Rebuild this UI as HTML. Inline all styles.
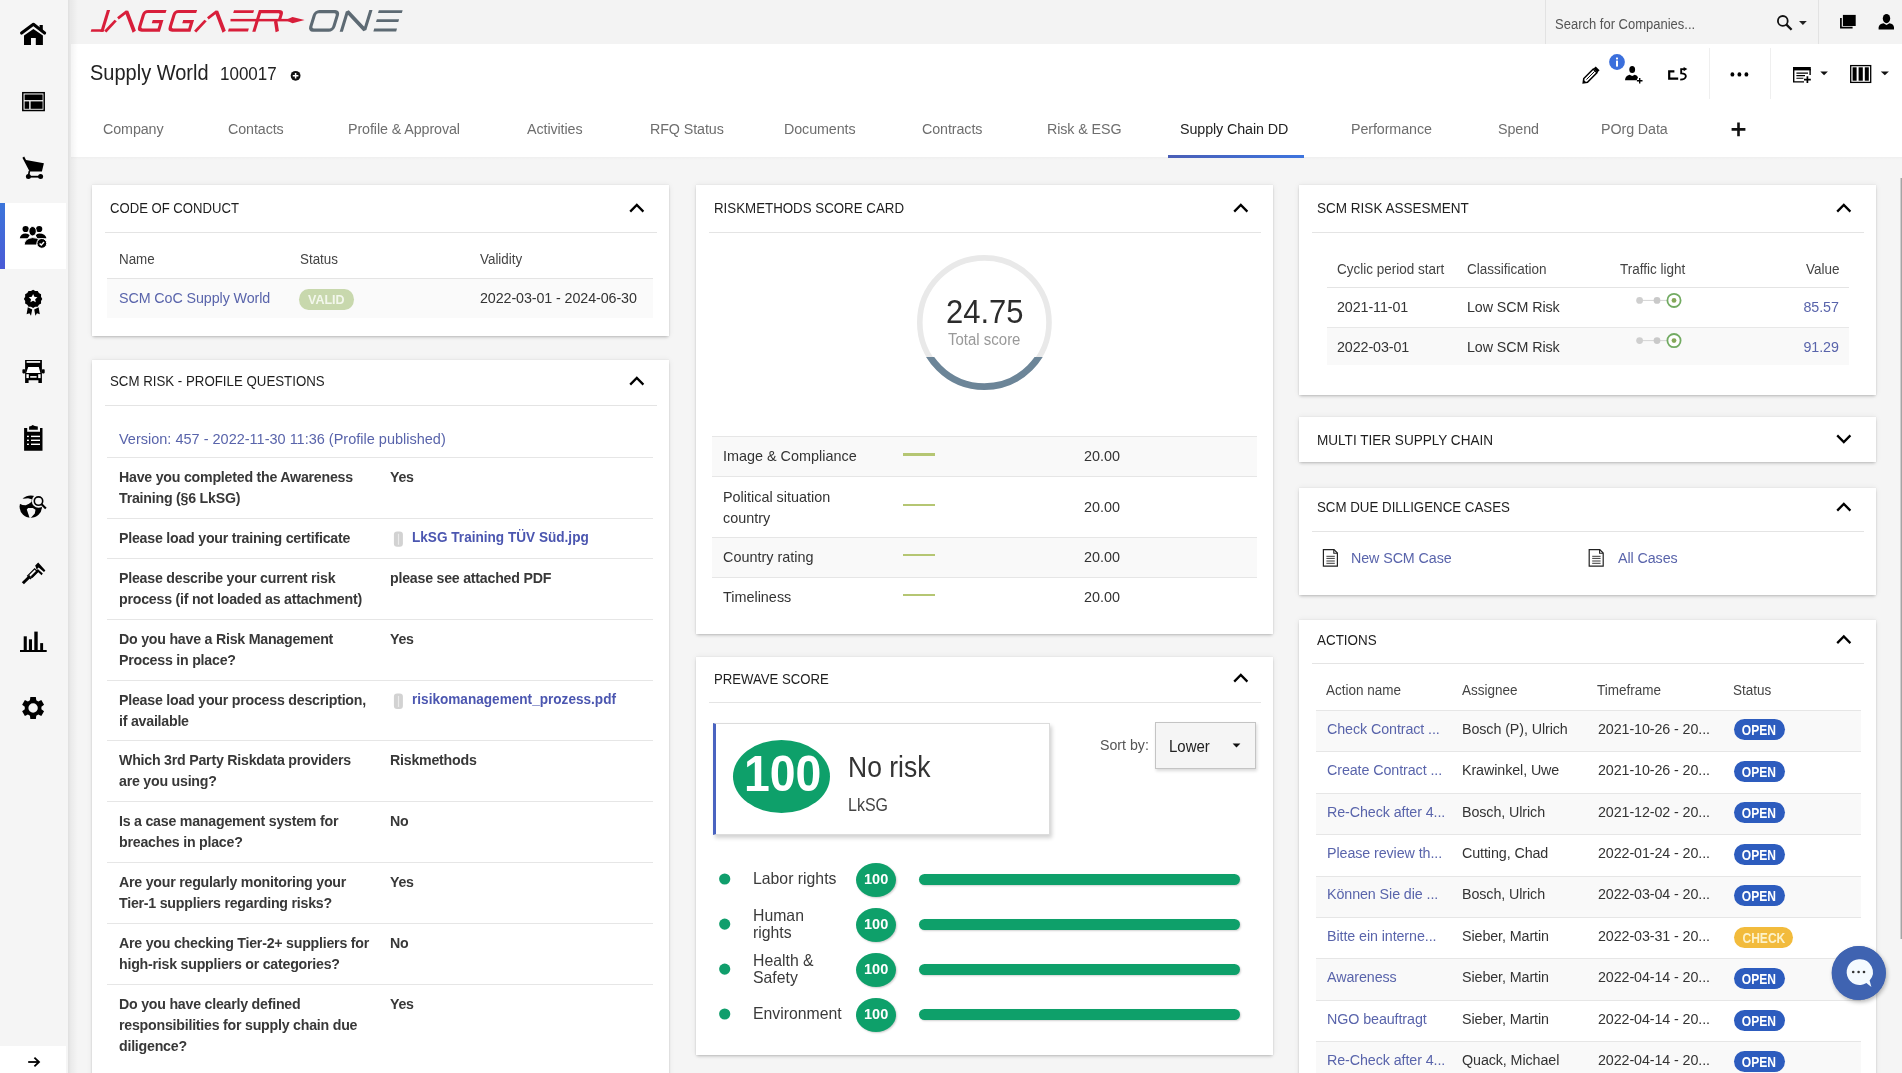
<!DOCTYPE html><html><head><meta charset="utf-8"><title>Supply World</title><style>
*{margin:0;padding:0;box-sizing:border-box}
html,body{width:1902px;height:1073px;overflow:hidden;background:#f5f5f5;font-family:"Liberation Sans",sans-serif;}
#pg{position:relative;width:1902px;height:1073px;overflow:hidden;background:#f5f5f5}
.t{position:absolute}
.r{position:absolute}
.card{position:absolute;background:#fff;box-shadow:0 2px 3px -1px rgba(0,0,0,0.22),0 0 6px rgba(0,0,0,0.07),0 0 1px rgba(0,0,0,0.12)}
.ttl{letter-spacing:-0.45px}
.q{font-weight:bold;color:#2f2f2f}
.badge{position:absolute;height:21px;border-radius:11px;color:#fff;font-weight:bold;font-size:14px;line-height:23px;text-align:center;white-space:nowrap}
svg.ov{position:absolute;left:0;top:0;width:1902px;height:1073px;pointer-events:none}
</style></head><body><div id="pg">
<div class="r" style="left:0px;top:0px;width:69px;height:1073px;background:#f5f5f5;"></div>
<div class="r" style="left:5px;top:203px;width:61px;height:66px;background:#fff;"></div>
<div class="r" style="left:0px;top:203px;width:5px;height:66px;background:linear-gradient(#3b75da,#4a5ad6);"></div>
<div class="r" style="left:0px;top:1046px;width:66px;height:27px;background:#fff;"></div>
<div class="r" style="left:71px;top:0px;width:1831px;height:44px;background:#f3f3f3;"></div>
<div class="r" style="left:1545px;top:0px;width:1px;height:44px;background:#e2e2e2;"></div>
<div class="r" style="left:1818px;top:0px;width:1px;height:44px;background:#e2e2e2;"></div>
<div class="t " style="left:1555.4px;top:15.68px;font-size:13.91px;line-height:16.0px;color:#555;white-space:nowrap;transform:scaleX(0.9346);transform-origin:0 0;">Search for Companies...</div>
<div class="r" style="left:71px;top:44px;width:1831px;height:113px;background:#fff;"></div>
<div class="r" style="left:71px;top:157px;width:1831px;height:3px;background:linear-gradient(rgba(0,0,0,0.025),rgba(0,0,0,0));"></div>
<div class="t " style="left:90px;top:60.58px;font-size:21.4px;line-height:24.61px;color:#222;white-space:nowrap;transform:scaleX(0.9346);transform-origin:0 0;">Supply World</div>
<div class="t " style="left:219.5px;top:63.54px;font-size:18.19px;line-height:20.92px;color:#222;white-space:nowrap;transform:scaleX(0.9346);transform-origin:0 0;">100017</div>
<div class="r" style="left:1709px;top:48px;width:1px;height:51px;background:#efefef;"></div>
<div class="r" style="left:1770px;top:48px;width:1px;height:51px;background:#efefef;"></div>
<div class="t " style="left:102.6px;top:119.60px;font-size:15.3px;line-height:17.59px;color:#6e6e6e;white-space:nowrap;transform:scaleX(0.9346);transform-origin:0 0;letter-spacing:-0.1px;">Company</div>
<div class="t " style="left:227.7px;top:119.60px;font-size:15.3px;line-height:17.59px;color:#6e6e6e;white-space:nowrap;transform:scaleX(0.9346);transform-origin:0 0;letter-spacing:-0.1px;">Contacts</div>
<div class="t " style="left:348.3px;top:119.60px;font-size:15.3px;line-height:17.59px;color:#6e6e6e;white-space:nowrap;transform:scaleX(0.9346);transform-origin:0 0;letter-spacing:-0.1px;">Profile &amp; Approval</div>
<div class="t " style="left:527.1px;top:119.60px;font-size:15.3px;line-height:17.59px;color:#6e6e6e;white-space:nowrap;transform:scaleX(0.9346);transform-origin:0 0;letter-spacing:-0.1px;">Activities</div>
<div class="t " style="left:649.5px;top:119.60px;font-size:15.3px;line-height:17.59px;color:#6e6e6e;white-space:nowrap;transform:scaleX(0.9346);transform-origin:0 0;letter-spacing:-0.1px;">RFQ Status</div>
<div class="t " style="left:784.2px;top:119.60px;font-size:15.3px;line-height:17.59px;color:#6e6e6e;white-space:nowrap;transform:scaleX(0.9346);transform-origin:0 0;letter-spacing:-0.1px;">Documents</div>
<div class="t " style="left:921.5px;top:119.60px;font-size:15.3px;line-height:17.59px;color:#6e6e6e;white-space:nowrap;transform:scaleX(0.9346);transform-origin:0 0;letter-spacing:-0.1px;">Contracts</div>
<div class="t " style="left:1047.3px;top:119.60px;font-size:15.3px;line-height:17.59px;color:#6e6e6e;white-space:nowrap;transform:scaleX(0.9346);transform-origin:0 0;letter-spacing:-0.1px;">Risk &amp; ESG</div>
<div class="t " style="left:1180.1px;top:119.60px;font-size:15.3px;line-height:17.59px;color:#222;white-space:nowrap;transform:scaleX(0.9346);transform-origin:0 0;letter-spacing:-0.1px;">Supply Chain DD</div>
<div class="t " style="left:1350.5px;top:119.60px;font-size:15.3px;line-height:17.59px;color:#6e6e6e;white-space:nowrap;transform:scaleX(0.9346);transform-origin:0 0;letter-spacing:-0.1px;">Performance</div>
<div class="t " style="left:1497.6px;top:119.60px;font-size:15.3px;line-height:17.59px;color:#6e6e6e;white-space:nowrap;transform:scaleX(0.9346);transform-origin:0 0;letter-spacing:-0.1px;">Spend</div>
<div class="t " style="left:1601px;top:119.60px;font-size:15.3px;line-height:17.59px;color:#6e6e6e;white-space:nowrap;transform:scaleX(0.9346);transform-origin:0 0;letter-spacing:-0.1px;">POrg Data</div>
<div class="r" style="left:1168px;top:155px;width:136px;height:3px;background:linear-gradient(90deg,#4a5eb6,#3d74de);"></div>
<div class="card" style="left:92px;top:185px;width:577px;height:151px"></div>
<div class="t " style="left:109.8px;top:198.82px;font-size:15.5px;line-height:17.82px;color:#1e1e1e;white-space:nowrap;transform:scaleX(0.8458);transform-origin:0 0;">CODE OF CONDUCT</div>
<div class="r" style="left:105px;top:232px;width:552px;height:1px;background:#e4e4e4;"></div>
<div class="t " style="left:119px;top:251.68px;font-size:13.8px;line-height:15.87px;color:#444;white-space:nowrap;transform:scaleX(0.9709);transform-origin:0 0;">Name</div>
<div class="t " style="left:299.5px;top:251.68px;font-size:13.8px;line-height:15.87px;color:#444;white-space:nowrap;transform:scaleX(0.9709);transform-origin:0 0;">Status</div>
<div class="t " style="left:480px;top:251.68px;font-size:13.8px;line-height:15.87px;color:#444;white-space:nowrap;transform:scaleX(0.9709);transform-origin:0 0;">Validity</div>
<div class="r" style="left:107px;top:278px;width:546px;height:1px;background:#e4e4e4;"></div>
<div class="r" style="left:107px;top:279px;width:546px;height:39px;background:#fafafa;"></div>
<div class="t " style="left:119px;top:289.10px;font-size:15.3px;line-height:17.59px;color:#5964ab;white-space:nowrap;transform:scaleX(0.9346);transform-origin:0 0;letter-spacing:-0.1px;">SCM CoC Supply World</div>
<div class="r" style="left:298.6px;top:288.7px;width:55.4px;height:21.2px;background:#c8d8ad;border-radius:10px/11px"></div>
<div class="t " style="left:307.6px;top:291.67px;font-size:13.38px;line-height:15.39px;color:#f3f7ec;font-weight:700;white-space:nowrap;transform:scaleX(0.9346);transform-origin:0 0;">VALID</div>
<div class="t " style="left:480px;top:289.10px;font-size:15.3px;line-height:17.59px;color:#333;white-space:nowrap;transform:scaleX(0.9346);transform-origin:0 0;letter-spacing:-0.1px;">2022-03-01 - 2024-06-30</div>
<div class="card" style="left:92px;top:360px;width:577px;height:730px"></div>
<div class="t " style="left:109.8px;top:371.72px;font-size:15.5px;line-height:17.82px;color:#1e1e1e;white-space:nowrap;transform:scaleX(0.8565);transform-origin:0 0;">SCM RISK - PROFILE QUESTIONS</div>
<div class="r" style="left:105px;top:405px;width:552px;height:1px;background:#e4e4e4;"></div>
<div class="t " style="left:118.5px;top:430.40px;font-size:15.52px;line-height:17.85px;color:#5964ab;white-space:nowrap;transform:scaleX(0.9346);transform-origin:0 0;">Version: 457 - 2022-11-30 11:36 (Profile published)</div>
<div class="r" style="left:107px;top:457px;width:546px;height:1px;background:#e6e6e6;"></div>
<div class="r" style="left:107px;top:518px;width:546px;height:1px;background:#e6e6e6;"></div>
<div class="r" style="left:107px;top:558px;width:546px;height:1px;background:#e6e6e6;"></div>
<div class="r" style="left:107px;top:619px;width:546px;height:1px;background:#e6e6e6;"></div>
<div class="r" style="left:107px;top:680px;width:546px;height:1px;background:#e6e6e6;"></div>
<div class="r" style="left:107px;top:740px;width:546px;height:1px;background:#e6e6e6;"></div>
<div class="r" style="left:107px;top:801px;width:546px;height:1px;background:#e6e6e6;"></div>
<div class="r" style="left:107px;top:862px;width:546px;height:1px;background:#e6e6e6;"></div>
<div class="r" style="left:107px;top:923px;width:546px;height:1px;background:#e6e6e6;"></div>
<div class="r" style="left:107px;top:984px;width:546px;height:1px;background:#e6e6e6;"></div>
<div class="t " style="left:118.5px;top:466.14px;font-size:15.19px;line-height:21px;color:#383838;font-weight:700;white-space:nowrap;transform:scaleX(0.9346);transform-origin:0 0;letter-spacing:-0.25px;">Have you completed the Awareness<br>Training (§6 LkSG)</div>
<div class="t " style="left:389.8px;top:466.14px;font-size:15.19px;line-height:21px;color:#383838;font-weight:700;white-space:nowrap;transform:scaleX(0.9346);transform-origin:0 0;letter-spacing:-0.25px;">Yes</div>
<div class="t " style="left:118.5px;top:527.04px;font-size:15.19px;line-height:21px;color:#383838;font-weight:700;white-space:nowrap;transform:scaleX(0.9346);transform-origin:0 0;letter-spacing:-0.25px;">Please load your training certificate</div>
<div class="t " style="left:411.9px;top:529.39px;font-size:14.55px;line-height:16.73px;color:#4b56b0;font-weight:700;white-space:nowrap;transform:scaleX(0.9346);transform-origin:0 0;">LkSG Training TÜV Süd.jpg</div>
<div class="t " style="left:118.5px;top:567.14px;font-size:15.19px;line-height:21px;color:#383838;font-weight:700;white-space:nowrap;transform:scaleX(0.9346);transform-origin:0 0;letter-spacing:-0.25px;">Please describe your current risk<br>process (if not loaded as attachment)</div>
<div class="t " style="left:389.8px;top:567.14px;font-size:15.19px;line-height:21px;color:#383838;font-weight:700;white-space:nowrap;transform:scaleX(0.9346);transform-origin:0 0;letter-spacing:-0.25px;">please see attached PDF</div>
<div class="t " style="left:118.5px;top:627.94px;font-size:15.19px;line-height:21px;color:#383838;font-weight:700;white-space:nowrap;transform:scaleX(0.9346);transform-origin:0 0;letter-spacing:-0.25px;">Do you have a Risk Management<br>Process in place?</div>
<div class="t " style="left:389.8px;top:627.94px;font-size:15.19px;line-height:21px;color:#383838;font-weight:700;white-space:nowrap;transform:scaleX(0.9346);transform-origin:0 0;letter-spacing:-0.25px;">Yes</div>
<div class="t " style="left:118.5px;top:689.14px;font-size:15.19px;line-height:21px;color:#383838;font-weight:700;white-space:nowrap;transform:scaleX(0.9346);transform-origin:0 0;letter-spacing:-0.25px;">Please load your process description,<br>if available</div>
<div class="t " style="left:411.9px;top:691.49px;font-size:14.55px;line-height:16.73px;color:#4b56b0;font-weight:700;white-space:nowrap;transform:scaleX(0.9346);transform-origin:0 0;">risikomanagement_prozess.pdf</div>
<div class="t " style="left:118.5px;top:749.24px;font-size:15.19px;line-height:21px;color:#383838;font-weight:700;white-space:nowrap;transform:scaleX(0.9346);transform-origin:0 0;letter-spacing:-0.25px;">Which 3rd Party Riskdata providers<br>are you using?</div>
<div class="t " style="left:389.8px;top:749.24px;font-size:15.19px;line-height:21px;color:#383838;font-weight:700;white-space:nowrap;transform:scaleX(0.9346);transform-origin:0 0;letter-spacing:-0.25px;">Riskmethods</div>
<div class="t " style="left:118.5px;top:810.14px;font-size:15.19px;line-height:21px;color:#383838;font-weight:700;white-space:nowrap;transform:scaleX(0.9346);transform-origin:0 0;letter-spacing:-0.25px;">Is a case management system for<br>breaches in place?</div>
<div class="t " style="left:389.8px;top:810.14px;font-size:15.19px;line-height:21px;color:#383838;font-weight:700;white-space:nowrap;transform:scaleX(0.9346);transform-origin:0 0;letter-spacing:-0.25px;">No</div>
<div class="t " style="left:118.5px;top:871.04px;font-size:15.19px;line-height:21px;color:#383838;font-weight:700;white-space:nowrap;transform:scaleX(0.9346);transform-origin:0 0;letter-spacing:-0.25px;">Are your regularly monitoring your<br>Tier-1 suppliers regarding risks?</div>
<div class="t " style="left:389.8px;top:871.04px;font-size:15.19px;line-height:21px;color:#383838;font-weight:700;white-space:nowrap;transform:scaleX(0.9346);transform-origin:0 0;letter-spacing:-0.25px;">Yes</div>
<div class="t " style="left:118.5px;top:931.84px;font-size:15.19px;line-height:21px;color:#383838;font-weight:700;white-space:nowrap;transform:scaleX(0.9346);transform-origin:0 0;letter-spacing:-0.25px;">Are you checking Tier-2+ suppliers for<br>high-risk suppliers or categories?</div>
<div class="t " style="left:389.8px;top:931.84px;font-size:15.19px;line-height:21px;color:#383838;font-weight:700;white-space:nowrap;transform:scaleX(0.9346);transform-origin:0 0;letter-spacing:-0.25px;">No</div>
<div class="t " style="left:118.5px;top:992.84px;font-size:15.19px;line-height:21px;color:#383838;font-weight:700;white-space:nowrap;transform:scaleX(0.9346);transform-origin:0 0;letter-spacing:-0.25px;">Do you have clearly defined<br>responsibilities for supply chain due<br>diligence?</div>
<div class="t " style="left:389.8px;top:992.84px;font-size:15.19px;line-height:21px;color:#383838;font-weight:700;white-space:nowrap;transform:scaleX(0.9346);transform-origin:0 0;letter-spacing:-0.25px;">Yes</div>
<div class="card" style="left:696px;top:185px;width:577px;height:449px"></div>
<div class="t " style="left:713.8px;top:199.22px;font-size:15.5px;line-height:17.82px;color:#1e1e1e;white-space:nowrap;transform:scaleX(0.8584);transform-origin:0 0;">RISKMETHODS SCORE CARD</div>
<div class="r" style="left:709px;top:232px;width:552px;height:1px;background:#e4e4e4;"></div>
<div class="t " style="left:946.2px;top:293.13px;font-size:33.17px;line-height:38.15px;color:#2c2c2c;white-space:nowrap;transform:scaleX(0.9346);transform-origin:0 0;">24.75</div>
<div class="t " style="left:948.3px;top:329.61px;font-size:16.05px;line-height:18.46px;color:#999;white-space:nowrap;transform:scaleX(0.9346);transform-origin:0 0;">Total score</div>
<div class="r" style="left:712px;top:436px;width:545px;height:40px;background:#f9f9f9;"></div>
<div class="r" style="left:712px;top:537px;width:545px;height:40px;background:#f9f9f9;"></div>
<div class="r" style="left:712px;top:436px;width:545px;height:1px;background:#e6e6e6;"></div>
<div class="r" style="left:712px;top:476px;width:545px;height:1px;background:#e6e6e6;"></div>
<div class="r" style="left:712px;top:537px;width:545px;height:1px;background:#e6e6e6;"></div>
<div class="r" style="left:712px;top:577px;width:545px;height:1px;background:#e6e6e6;"></div>
<div class="t " style="left:722.5px;top:445.16px;font-size:15.41px;line-height:21px;color:#333;white-space:nowrap;transform:scaleX(0.9346);transform-origin:0 0;">Image &amp; Compliance</div>
<div class="r" style="left:903px;top:453.3px;width:32px;height:2.8999999999999773px;background:#b5c673;"></div>
<div class="t " style="left:1084.3px;top:446.80px;font-size:15.41px;line-height:17.72px;color:#333;white-space:nowrap;transform:scaleX(0.9346);transform-origin:0 0;">20.00</div>
<div class="t " style="left:722.5px;top:485.56px;font-size:15.41px;line-height:21px;color:#333;white-space:nowrap;transform:scaleX(0.9346);transform-origin:0 0;">Political situation<br>country</div>
<div class="r" style="left:903px;top:503.6px;width:32px;height:2.8999999999999773px;background:#b5c673;"></div>
<div class="t " style="left:1084.3px;top:497.80px;font-size:15.41px;line-height:17.72px;color:#333;white-space:nowrap;transform:scaleX(0.9346);transform-origin:0 0;">20.00</div>
<div class="t " style="left:722.5px;top:546.16px;font-size:15.41px;line-height:21px;color:#333;white-space:nowrap;transform:scaleX(0.9346);transform-origin:0 0;">Country rating</div>
<div class="r" style="left:903px;top:553.6px;width:32px;height:2.8999999999999773px;background:#b5c673;"></div>
<div class="t " style="left:1084.3px;top:547.80px;font-size:15.41px;line-height:17.72px;color:#333;white-space:nowrap;transform:scaleX(0.9346);transform-origin:0 0;">20.00</div>
<div class="t " style="left:722.5px;top:586.16px;font-size:15.41px;line-height:21px;color:#333;white-space:nowrap;transform:scaleX(0.9346);transform-origin:0 0;">Timeliness</div>
<div class="r" style="left:903px;top:593.6px;width:32px;height:2.8999999999999773px;background:#b5c673;"></div>
<div class="t " style="left:1084.3px;top:587.80px;font-size:15.41px;line-height:17.72px;color:#333;white-space:nowrap;transform:scaleX(0.9346);transform-origin:0 0;">20.00</div>
<div class="card" style="left:696px;top:657px;width:577px;height:397.5px"></div>
<div class="t " style="left:713.8px;top:670.32px;font-size:15.5px;line-height:17.82px;color:#1e1e1e;white-space:nowrap;transform:scaleX(0.8497);transform-origin:0 0;">PREWAVE SCORE</div>
<div class="r" style="left:709px;top:702px;width:552px;height:1px;background:#e4e4e4;"></div>
<div class="r" style="left:713px;top:722.6px;width:337px;height:112px;background:#fff;border:1px solid #dcdcdc;border-left:3px solid #4a63c0;box-shadow:2px 3px 4px rgba(0,0,0,0.18)"></div>
<div class="r" style="left:732.8px;top:740px;width:97.2px;height:73px;border-radius:50%;background:#0ea06a"></div>
<div class="t " style="left:743.9px;top:745.82px;font-size:50.11px;line-height:57.63px;color:#fff;font-weight:700;white-space:nowrap;transform:scaleX(0.9259);transform-origin:0 0;">100</div>
<div class="t " style="left:848px;top:750.65px;font-size:28.81px;line-height:33.13px;color:#333;white-space:nowrap;transform:scaleX(0.9200);transform-origin:0 0;">No risk</div>
<div class="t " style="left:848px;top:793.51px;font-size:19.2px;line-height:22.08px;color:#444;white-space:nowrap;transform:scaleX(0.8333);transform-origin:0 0;">LkSG</div>
<div class="t " style="left:1099.5px;top:736.40px;font-size:15.19px;line-height:17.47px;color:#555;white-space:nowrap;transform:scaleX(0.9346);transform-origin:0 0;">Sort by:</div>
<div class="r" style="left:1155px;top:722px;width:100.5px;height:46.5px;background:#f5f5f5;border:1px solid #c4c4c4;box-shadow:1px 2px 3px rgba(0,0,0,0.15)"></div>
<div class="t " style="left:1169px;top:736.61px;font-size:16.05px;line-height:18.46px;color:#222;white-space:nowrap;transform:scaleX(0.9346);transform-origin:0 0;">Lower</div>
<div class="t " style="left:753px;top:870.84px;font-size:16.91px;line-height:16.8px;color:#3a3a3a;white-space:nowrap;transform:scaleX(0.9346);transform-origin:0 0;">Labor rights</div>
<div class="r" style="left:856px;top:862.8px;width:40px;height:34px;border-radius:50%;background:#0ea06a;box-shadow:1px 1px 2px rgba(0,0,0,0.2)"></div>
<div class="t " style="left:864.3px;top:869.80px;font-size:15.52px;line-height:17.85px;color:#fff;font-weight:700;white-space:nowrap;transform:scaleX(0.9346);transform-origin:0 0;">100</div>
<div class="r" style="left:919px;top:873.8px;width:321px;height:11.2px;border-radius:6px;background:#0ea06a;box-shadow:1px 1px 2px rgba(0,0,0,0.18)"></div>
<div class="t " style="left:753px;top:907.84px;font-size:16.91px;line-height:16.8px;color:#3a3a3a;white-space:nowrap;transform:scaleX(0.9346);transform-origin:0 0;">Human<br>rights</div>
<div class="r" style="left:856px;top:907.9px;width:40px;height:34px;border-radius:50%;background:#0ea06a;box-shadow:1px 1px 2px rgba(0,0,0,0.2)"></div>
<div class="t " style="left:864.3px;top:914.90px;font-size:15.52px;line-height:17.85px;color:#fff;font-weight:700;white-space:nowrap;transform:scaleX(0.9346);transform-origin:0 0;">100</div>
<div class="r" style="left:919px;top:918.9px;width:321px;height:11.2px;border-radius:6px;background:#0ea06a;box-shadow:1px 1px 2px rgba(0,0,0,0.18)"></div>
<div class="t " style="left:753px;top:952.84px;font-size:16.91px;line-height:16.8px;color:#3a3a3a;white-space:nowrap;transform:scaleX(0.9346);transform-origin:0 0;">Health &amp;<br>Safety</div>
<div class="r" style="left:856px;top:952.9px;width:40px;height:34px;border-radius:50%;background:#0ea06a;box-shadow:1px 1px 2px rgba(0,0,0,0.2)"></div>
<div class="t " style="left:864.3px;top:959.90px;font-size:15.52px;line-height:17.85px;color:#fff;font-weight:700;white-space:nowrap;transform:scaleX(0.9346);transform-origin:0 0;">100</div>
<div class="r" style="left:919px;top:963.9px;width:321px;height:11.2px;border-radius:6px;background:#0ea06a;box-shadow:1px 1px 2px rgba(0,0,0,0.18)"></div>
<div class="t " style="left:753px;top:1005.84px;font-size:16.91px;line-height:16.8px;color:#3a3a3a;white-space:nowrap;transform:scaleX(0.9346);transform-origin:0 0;">Environment</div>
<div class="r" style="left:856px;top:997.8px;width:40px;height:34px;border-radius:50%;background:#0ea06a;box-shadow:1px 1px 2px rgba(0,0,0,0.2)"></div>
<div class="t " style="left:864.3px;top:1004.80px;font-size:15.52px;line-height:17.85px;color:#fff;font-weight:700;white-space:nowrap;transform:scaleX(0.9346);transform-origin:0 0;">100</div>
<div class="r" style="left:919px;top:1008.8px;width:321px;height:11.2px;border-radius:6px;background:#0ea06a;box-shadow:1px 1px 2px rgba(0,0,0,0.18)"></div>
<div class="card" style="left:1299px;top:185px;width:577px;height:209.60000000000002px"></div>
<div class="t " style="left:1316.8px;top:198.92px;font-size:15.5px;line-height:17.82px;color:#1e1e1e;white-space:nowrap;transform:scaleX(0.8729);transform-origin:0 0;">SCM RISK ASSESMENT</div>
<div class="r" style="left:1312px;top:232px;width:552px;height:1px;background:#e4e4e4;"></div>
<div class="t " style="left:1337.3px;top:260.78px;font-size:13.91px;line-height:16.0px;color:#444;white-space:nowrap;transform:scaleX(0.9709);transform-origin:0 0;">Cyclic period start</div>
<div class="t " style="left:1467.3px;top:260.78px;font-size:13.91px;line-height:16.0px;color:#444;white-space:nowrap;transform:scaleX(0.9709);transform-origin:0 0;">Classification</div>
<div class="t " style="left:1619.8px;top:260.78px;font-size:13.91px;line-height:16.0px;color:#444;white-space:nowrap;transform:scaleX(0.9709);transform-origin:0 0;">Traffic light</div>
<div class="t " style="right:62.799999999999955px;top:260.78px;font-size:13.91px;line-height:16.0px;color:#444;text-align:right;white-space:nowrap;transform:scaleX(0.9709);transform-origin:100% 0;">Value</div>
<div class="r" style="left:1327px;top:287px;width:522px;height:1px;background:#e4e4e4;"></div>
<div class="r" style="left:1327px;top:328px;width:522px;height:37px;background:#f9f9f9;"></div>
<div class="r" style="left:1327px;top:327px;width:522px;height:1px;background:#e8e8e8;"></div>
<div class="t " style="left:1337.3px;top:297.50px;font-size:15.3px;line-height:17.59px;color:#333;white-space:nowrap;transform:scaleX(0.9346);transform-origin:0 0;letter-spacing:-0.1px;">2021-11-01</div>
<div class="t " style="left:1467.3px;top:297.50px;font-size:15.3px;line-height:17.59px;color:#333;white-space:nowrap;transform:scaleX(0.9346);transform-origin:0 0;letter-spacing:-0.1px;">Low SCM Risk</div>
<div class="t " style="right:62.799999999999955px;top:297.50px;font-size:15.3px;line-height:17.59px;color:#5964ab;text-align:right;white-space:nowrap;transform:scaleX(0.9346);transform-origin:100% 0;letter-spacing:-0.1px;">85.57</div>
<div class="t " style="left:1337.3px;top:337.70px;font-size:15.3px;line-height:17.59px;color:#333;white-space:nowrap;transform:scaleX(0.9346);transform-origin:0 0;letter-spacing:-0.1px;">2022-03-01</div>
<div class="t " style="left:1467.3px;top:337.70px;font-size:15.3px;line-height:17.59px;color:#333;white-space:nowrap;transform:scaleX(0.9346);transform-origin:0 0;letter-spacing:-0.1px;">Low SCM Risk</div>
<div class="t " style="right:62.799999999999955px;top:337.70px;font-size:15.3px;line-height:17.59px;color:#5964ab;text-align:right;white-space:nowrap;transform:scaleX(0.9346);transform-origin:100% 0;letter-spacing:-0.1px;">91.29</div>
<div class="card" style="left:1299px;top:417px;width:577px;height:45.10000000000002px"></div>
<div class="t " style="left:1316.8px;top:430.92px;font-size:15.5px;line-height:17.82px;color:#1e1e1e;white-space:nowrap;transform:scaleX(0.8748);transform-origin:0 0;">MULTI TIER SUPPLY CHAIN</div>
<div class="card" style="left:1299px;top:487.5px;width:577px;height:107.29999999999995px"></div>
<div class="t " style="left:1316.8px;top:497.52px;font-size:15.5px;line-height:17.82px;color:#1e1e1e;white-space:nowrap;transform:scaleX(0.8584);transform-origin:0 0;">SCM DUE DILLIGENCE CASES</div>
<div class="r" style="left:1312px;top:531px;width:552px;height:1px;background:#e4e4e4;"></div>
<div class="t " style="left:1351.1px;top:549.20px;font-size:15.3px;line-height:17.59px;color:#5964ab;white-space:nowrap;transform:scaleX(0.9346);transform-origin:0 0;letter-spacing:-0.1px;">New SCM Case</div>
<div class="t " style="left:1617.5px;top:549.20px;font-size:15.3px;line-height:17.59px;color:#5964ab;white-space:nowrap;transform:scaleX(0.9346);transform-origin:0 0;letter-spacing:-0.1px;">All Cases</div>
<div class="card" style="left:1299px;top:620px;width:577px;height:470px"></div>
<div class="t " style="left:1316.8px;top:630.82px;font-size:15.5px;line-height:17.82px;color:#1e1e1e;white-space:nowrap;transform:scaleX(0.8652);transform-origin:0 0;">ACTIONS</div>
<div class="r" style="left:1312px;top:663px;width:552px;height:1px;background:#e4e4e4;"></div>
<div class="t " style="left:1326px;top:682.38px;font-size:13.91px;line-height:16.0px;color:#444;white-space:nowrap;transform:scaleX(0.9709);transform-origin:0 0;">Action name</div>
<div class="t " style="left:1461.5px;top:682.38px;font-size:13.91px;line-height:16.0px;color:#444;white-space:nowrap;transform:scaleX(0.9709);transform-origin:0 0;">Assignee</div>
<div class="t " style="left:1597.3px;top:682.38px;font-size:13.91px;line-height:16.0px;color:#444;white-space:nowrap;transform:scaleX(0.9709);transform-origin:0 0;">Timeframe</div>
<div class="t " style="left:1733px;top:682.38px;font-size:13.91px;line-height:16.0px;color:#444;white-space:nowrap;transform:scaleX(0.9709);transform-origin:0 0;">Status</div>
<div class="r" style="left:1316px;top:711px;width:545px;height:40px;background:#f9f9f9;"></div>
<div class="r" style="left:1316px;top:710px;width:545px;height:1px;background:#e6e6e6;"></div>
<div class="t " style="left:1326.5px;top:719.60px;font-size:15.3px;line-height:17.59px;color:#5964ab;white-space:nowrap;transform:scaleX(0.9346);transform-origin:0 0;letter-spacing:-0.1px;">Check Contract ...</div>
<div class="t " style="left:1462px;top:719.60px;font-size:15.3px;line-height:17.59px;color:#333;white-space:nowrap;transform:scaleX(0.9346);transform-origin:0 0;letter-spacing:-0.1px;">Bosch (P), Ulrich</div>
<div class="t " style="left:1597.6px;top:719.60px;font-size:15.3px;line-height:17.59px;color:#333;white-space:nowrap;transform:scaleX(0.9346);transform-origin:0 0;letter-spacing:-0.1px;">2021-10-26 - 20...</div>
<div class="badge" style="left:1733.9px;top:719.4px;width:50.7px;background:#2d5cbe"><span style="display:inline-block;transform:scaleX(0.86)">OPEN</span></div>
<div class="r" style="left:1316px;top:751px;width:545px;height:1px;background:#e6e6e6;"></div>
<div class="t " style="left:1326.5px;top:761.05px;font-size:15.3px;line-height:17.59px;color:#5964ab;white-space:nowrap;transform:scaleX(0.9346);transform-origin:0 0;letter-spacing:-0.1px;">Create Contract ...</div>
<div class="t " style="left:1462px;top:761.05px;font-size:15.3px;line-height:17.59px;color:#333;white-space:nowrap;transform:scaleX(0.9346);transform-origin:0 0;letter-spacing:-0.1px;">Krawinkel, Uwe</div>
<div class="t " style="left:1597.6px;top:761.05px;font-size:15.3px;line-height:17.59px;color:#333;white-space:nowrap;transform:scaleX(0.9346);transform-origin:0 0;letter-spacing:-0.1px;">2021-10-26 - 20...</div>
<div class="badge" style="left:1733.9px;top:760.9px;width:50.7px;background:#2d5cbe"><span style="display:inline-block;transform:scaleX(0.86)">OPEN</span></div>
<div class="r" style="left:1316px;top:794px;width:545px;height:40px;background:#f9f9f9;"></div>
<div class="r" style="left:1316px;top:793px;width:545px;height:1px;background:#e6e6e6;"></div>
<div class="t " style="left:1326.5px;top:802.50px;font-size:15.3px;line-height:17.59px;color:#5964ab;white-space:nowrap;transform:scaleX(0.9346);transform-origin:0 0;letter-spacing:-0.1px;">Re-Check after 4...</div>
<div class="t " style="left:1462px;top:802.50px;font-size:15.3px;line-height:17.59px;color:#333;white-space:nowrap;transform:scaleX(0.9346);transform-origin:0 0;letter-spacing:-0.1px;">Bosch, Ulrich</div>
<div class="t " style="left:1597.6px;top:802.50px;font-size:15.3px;line-height:17.59px;color:#333;white-space:nowrap;transform:scaleX(0.9346);transform-origin:0 0;letter-spacing:-0.1px;">2021-12-02 - 20...</div>
<div class="badge" style="left:1733.9px;top:802.3px;width:50.7px;background:#2d5cbe"><span style="display:inline-block;transform:scaleX(0.86)">OPEN</span></div>
<div class="r" style="left:1316px;top:834px;width:545px;height:1px;background:#e6e6e6;"></div>
<div class="t " style="left:1326.5px;top:843.95px;font-size:15.3px;line-height:17.59px;color:#5964ab;white-space:nowrap;transform:scaleX(0.9346);transform-origin:0 0;letter-spacing:-0.1px;">Please review th...</div>
<div class="t " style="left:1462px;top:843.95px;font-size:15.3px;line-height:17.59px;color:#333;white-space:nowrap;transform:scaleX(0.9346);transform-origin:0 0;letter-spacing:-0.1px;">Cutting, Chad</div>
<div class="t " style="left:1597.6px;top:843.95px;font-size:15.3px;line-height:17.59px;color:#333;white-space:nowrap;transform:scaleX(0.9346);transform-origin:0 0;letter-spacing:-0.1px;">2022-01-24 - 20...</div>
<div class="badge" style="left:1733.9px;top:843.8px;width:50.7px;background:#2d5cbe"><span style="display:inline-block;transform:scaleX(0.86)">OPEN</span></div>
<div class="r" style="left:1316px;top:877px;width:545px;height:40px;background:#f9f9f9;"></div>
<div class="r" style="left:1316px;top:876px;width:545px;height:1px;background:#e6e6e6;"></div>
<div class="t " style="left:1326.5px;top:885.40px;font-size:15.3px;line-height:17.59px;color:#5964ab;white-space:nowrap;transform:scaleX(0.9346);transform-origin:0 0;letter-spacing:-0.1px;">Können Sie die ...</div>
<div class="t " style="left:1462px;top:885.40px;font-size:15.3px;line-height:17.59px;color:#333;white-space:nowrap;transform:scaleX(0.9346);transform-origin:0 0;letter-spacing:-0.1px;">Bosch, Ulrich</div>
<div class="t " style="left:1597.6px;top:885.40px;font-size:15.3px;line-height:17.59px;color:#333;white-space:nowrap;transform:scaleX(0.9346);transform-origin:0 0;letter-spacing:-0.1px;">2022-03-04 - 20...</div>
<div class="badge" style="left:1733.9px;top:885.2px;width:50.7px;background:#2d5cbe"><span style="display:inline-block;transform:scaleX(0.86)">OPEN</span></div>
<div class="r" style="left:1316px;top:917px;width:545px;height:1px;background:#e6e6e6;"></div>
<div class="t " style="left:1326.5px;top:926.85px;font-size:15.3px;line-height:17.59px;color:#5964ab;white-space:nowrap;transform:scaleX(0.9346);transform-origin:0 0;letter-spacing:-0.1px;">Bitte ein interne...</div>
<div class="t " style="left:1462px;top:926.85px;font-size:15.3px;line-height:17.59px;color:#333;white-space:nowrap;transform:scaleX(0.9346);transform-origin:0 0;letter-spacing:-0.1px;">Sieber, Martin</div>
<div class="t " style="left:1597.6px;top:926.85px;font-size:15.3px;line-height:17.59px;color:#333;white-space:nowrap;transform:scaleX(0.9346);transform-origin:0 0;letter-spacing:-0.1px;">2022-03-31 - 20...</div>
<div class="badge" style="left:1733.9px;top:926.7px;width:59px;background:#f2bb3c;color:#fdf2c8"><span style="display:inline-block;transform:scaleX(0.86)">CHECK</span></div>
<div class="r" style="left:1316px;top:959px;width:545px;height:41px;background:#f9f9f9;"></div>
<div class="r" style="left:1316px;top:958px;width:545px;height:1px;background:#e6e6e6;"></div>
<div class="t " style="left:1326.5px;top:968.30px;font-size:15.3px;line-height:17.59px;color:#5964ab;white-space:nowrap;transform:scaleX(0.9346);transform-origin:0 0;letter-spacing:-0.1px;">Awareness</div>
<div class="t " style="left:1462px;top:968.30px;font-size:15.3px;line-height:17.59px;color:#333;white-space:nowrap;transform:scaleX(0.9346);transform-origin:0 0;letter-spacing:-0.1px;">Sieber, Martin</div>
<div class="t " style="left:1597.6px;top:968.30px;font-size:15.3px;line-height:17.59px;color:#333;white-space:nowrap;transform:scaleX(0.9346);transform-origin:0 0;letter-spacing:-0.1px;">2022-04-14 - 20...</div>
<div class="badge" style="left:1733.9px;top:968.1px;width:50.7px;background:#2d5cbe"><span style="display:inline-block;transform:scaleX(0.86)">OPEN</span></div>
<div class="r" style="left:1316px;top:1000px;width:545px;height:1px;background:#e6e6e6;"></div>
<div class="t " style="left:1326.5px;top:1009.75px;font-size:15.3px;line-height:17.59px;color:#5964ab;white-space:nowrap;transform:scaleX(0.9346);transform-origin:0 0;letter-spacing:-0.1px;">NGO beauftragt</div>
<div class="t " style="left:1462px;top:1009.75px;font-size:15.3px;line-height:17.59px;color:#333;white-space:nowrap;transform:scaleX(0.9346);transform-origin:0 0;letter-spacing:-0.1px;">Sieber, Martin</div>
<div class="t " style="left:1597.6px;top:1009.75px;font-size:15.3px;line-height:17.59px;color:#333;white-space:nowrap;transform:scaleX(0.9346);transform-origin:0 0;letter-spacing:-0.1px;">2022-04-14 - 20...</div>
<div class="badge" style="left:1733.9px;top:1009.6px;width:50.7px;background:#2d5cbe"><span style="display:inline-block;transform:scaleX(0.86)">OPEN</span></div>
<div class="r" style="left:1316px;top:1042px;width:545px;height:41px;background:#f9f9f9;"></div>
<div class="r" style="left:1316px;top:1041px;width:545px;height:1px;background:#e6e6e6;"></div>
<div class="t " style="left:1326.5px;top:1051.20px;font-size:15.3px;line-height:17.59px;color:#5964ab;white-space:nowrap;transform:scaleX(0.9346);transform-origin:0 0;letter-spacing:-0.1px;">Re-Check after 4...</div>
<div class="t " style="left:1462px;top:1051.20px;font-size:15.3px;line-height:17.59px;color:#333;white-space:nowrap;transform:scaleX(0.9346);transform-origin:0 0;letter-spacing:-0.1px;">Quack, Michael</div>
<div class="t " style="left:1597.6px;top:1051.20px;font-size:15.3px;line-height:17.59px;color:#333;white-space:nowrap;transform:scaleX(0.9346);transform-origin:0 0;letter-spacing:-0.1px;">2022-04-14 - 20...</div>
<div class="badge" style="left:1733.9px;top:1051.0px;width:50.7px;background:#2d5cbe"><span style="display:inline-block;transform:scaleX(0.86)">OPEN</span></div>
<div class="r" style="left:68px;top:0px;width:10px;height:1073px;background:linear-gradient(90deg,rgba(0,0,0,0.09),rgba(0,0,0,0.045) 30%,rgba(0,0,0,0));"></div>
<div class="r" style="left:1831.6px;top:946.1px;width:54px;height:54px;border-radius:50%;background:#3f63b1;box-shadow:1px 2px 4px rgba(0,0,0,0.3)"></div>
<div class="r" style="left:1900px;top:178px;width:1px;height:761px;background:#cfcfcf;"></div>
<div class="r" style="left:1901px;top:178px;width:1px;height:761px;background:#a4a4a4;"></div>
<svg class="ov" viewBox="0 0 1902 1073"><g fill="#d81e3a" transform="translate(0,20.8) skewX(-17) translate(0,-20.8)"><rect x="103.6" y="10" width="3.2" height="21.7"/><rect x="94" y="29.2" width="12.8" height="2.5"/><polyline points="108.6,31.7 115.6,20.5" fill="none" stroke="#d81e3a" stroke-width="3.3"/><polyline points="117.2,18.4 123.8,11.6 137.6,31.7" fill="none" stroke="#d81e3a" stroke-width="3.3" stroke-linejoin="bevel"/><path d="M163.2,11.5 H145 Q141.6,11.5 141.6,15 V26.5 Q141.6,30.1 145,30.1 H161.6 V21.6 H152.5" fill="none" stroke="#d81e3a" stroke-width="3.2"/><path d="M193.8,11.5 H175.5 Q172.2,11.5 172.2,15 V26.5 Q172.2,30.1 175.5,30.1 H192.2 V21.6 H183" fill="none" stroke="#d81e3a" stroke-width="3.2"/><polyline points="198.5,31.7 205.5,20.5" fill="none" stroke="#d81e3a" stroke-width="3.3"/><polyline points="207.1,18.4 213.7,11.6 227.5,31.7" fill="none" stroke="#d81e3a" stroke-width="3.3" stroke-linejoin="bevel"/><rect x="230.8" y="10.2" width="20" height="2.8"/><rect x="231.2" y="28.6" width="20" height="2.8"/><path d="M257.2,31.7 V11.6 H276 Q279.2,11.6 279.2,14.8 V20.2" fill="none" stroke="#d81e3a" stroke-width="3.2"/><polyline points="275.6,20.8 280.6,31.7" fill="none" stroke="#d81e3a" stroke-width="3.2"/><rect x="312.6" y="11.6" width="23" height="18.5" rx="3.6" fill="none" stroke="#5d6a73" stroke-width="3.2"/><polyline points="344.6,31.7 344.6,11.6 367.6,30.1 367.6,10" fill="none" stroke="#5d6a73" stroke-width="3.2" stroke-linejoin="bevel"/><rect x="375.6" y="10.2" width="23.8" height="2.8" fill="#5d6a73"/><rect x="376.4" y="19.2" width="22.2" height="2.8" fill="#5d6a73"/><rect x="376.6" y="28.6" width="22.8" height="2.8" fill="#5d6a73"/></g><rect x="230.5" y="18.9" width="60" height="2.5" fill="#d81e3a"/><polygon points="285.5,20.1 292.5,16.9 304.6,20.1 292.5,23.3" fill="#d81e3a"/><g fill="#000"><polyline points="21.6,33 33.4,24.3 44.6,33" fill="none" stroke="#000" stroke-width="3.1" stroke-linecap="round" stroke-linejoin="round"/><rect x="39.6" y="25" width="3.2" height="5"/><path d="M33.4,29 L24,35.6 V44.9 H31 V38 H35.8 V44.9 H42.9 V35.6 Z"/><rect x="22.8" y="92.7" width="21.4" height="17.8" fill="none" stroke="#000" stroke-width="1.5"/><rect x="24.6" y="94.5" width="18" height="5.6"/><rect x="24.6" y="101.4" width="4.6" height="7.4"/><rect x="30.6" y="101.4" width="12" height="7.4"/><path d="M22.4,157.8 L24.2,156.6 L26,160 L43.9,163.2 L41.9,171.5 L29.6,171.5 Z"/><path d="M29.4,171 L28.6,175.5" stroke="#000" stroke-width="1.6"/><circle cx="28.4" cy="176.6" r="2.5"/><circle cx="40.6" cy="176.6" r="2.5"/><rect x="28.4" y="175.8" width="12.2" height="1.8"/><circle cx="25.6" cy="229" r="3.1"/><path d="M19.8,238.2 Q20.6,233.6 25.6,233.4 Q28.6,233.6 29.6,235.4 L27.6,238.2 Z"/><circle cx="39.2" cy="229" r="3.1"/><path d="M46.4,238.2 Q45.6,233.6 39.2,233.4 Q36.6,233.6 35.8,235.4 L37.4,238.2 Z"/><ellipse cx="32.6" cy="231.2" rx="3.7" ry="4.7" stroke="#fff" stroke-width="0.9"/><path d="M24.2,245 Q24.4,238.4 32.6,237.6 Q37,237.8 38.8,239.6 L36.6,245 Z" stroke="#fff" stroke-width="0.9"/><circle cx="41.8" cy="243.4" r="4.9" stroke="#fff" stroke-width="1"/><polyline points="39.6,243.4 41.3,245 44,242" fill="none" stroke="#fff" stroke-width="1.4"/><polygon points="42.30,298.90 41.02,301.02 41.07,303.50 38.90,304.70 37.70,306.87 35.22,306.82 33.10,308.10 30.98,306.82 28.50,306.87 27.30,304.70 25.13,303.50 25.18,301.02 23.90,298.90 25.18,296.78 25.13,294.30 27.30,293.10 28.50,290.93 30.98,290.98 33.10,289.70 35.22,290.98 37.70,290.93 38.90,293.10 41.07,294.30 41.02,296.78"/><polygon fill="#fff" points="33.10,294.00 34.39,296.82 37.47,297.18 35.19,299.28 35.80,302.32 33.10,300.80 30.40,302.32 31.01,299.28 28.73,297.18 31.81,296.82"/><polygon points="27.8,307.2 32.2,309.6 31,315.8 29.4,313.2 26.6,314.2"/><polygon points="34.2,309.6 38.6,307.2 39.8,314.2 37,313.2 35.4,315.8"/><path d="M25.1,360 H41.9 V383 H38.4 V380.2 H28.6 V383 H25.1 Z"/><rect x="26.6" y="361.1" width="13.6" height="1.7" fill="#fff"/><polygon fill="#fff" points="28.2,367.1 38.8,367.1 40.4,372.9 26.2,372.9"/><rect x="22.4" y="369.2" width="2.8" height="4.2" rx="0.8"/><rect x="41.9" y="369.2" width="2.8" height="4.2" rx="0.8"/><rect x="26.4" y="374.2" width="2.4" height="3.9" fill="#fff"/><rect x="38.2" y="374.2" width="2.4" height="3.9" fill="#fff"/><rect x="30.2" y="376.1" width="6.4" height="1.6" fill="#fff"/><path d="M24.1,428 H27.2 V431.8 H40 V428 H42.5 V450.7 H24.1 Z"/><path d="M29.1,429.8 V426.6 Q31.5,426 32.6,424.9 Q34.4,426 37.8,426.6 V429.8 Z"/><rect x="27" y="435.7" width="1.9" height="1.4" fill="#fff"/><rect x="31" y="435.7" width="9" height="1.4" fill="#fff"/><rect x="27" y="439.6" width="1.9" height="1.4" fill="#fff"/><rect x="31" y="439.6" width="9" height="1.4" fill="#fff"/><rect x="27" y="443.6" width="1.9" height="1.4" fill="#fff"/><rect x="31" y="443.6" width="9" height="1.4" fill="#fff"/><defs><mask id="gm"><rect x="0" y="480" width="60" height="50" fill="#fff"/><polygon fill="#000" points="18,499.6 23.5,498.7 28,498.3 31.8,499.2 31.4,502 29,503.7 25.8,505.3 22.5,505.1 18,503"/><polygon fill="#000" points="28.1,508.1 32.8,508.1 35.5,509.8 34.8,513.5 31.4,517.2 29.8,518.5 28.4,514.2 26.8,509.5"/><circle cx="38.5" cy="501.1" r="6.7" fill="#000"/></mask></defs><circle cx="30.8" cy="506.6" r="11.2" mask="url(#gm)"/><circle cx="38.5" cy="501.1" r="4.2" fill="none" stroke="#000" stroke-width="1.6"/><line x1="41.6" y1="504.2" x2="45.9" y2="508.5" stroke="#000" stroke-width="2.1"/><line x1="22.9" y1="583.3" x2="30.2" y2="576" stroke="#000" stroke-width="3"/><polygon points="27.6,575.8 34.6,568.8 37.4,571.6 30.4,578.6" fill="none" stroke="#000" stroke-width="1.2"/><line x1="31.6" y1="577.2" x2="37.6" y2="571.2" stroke="#000" stroke-width="2.4"/><polygon points="35.2,565.6 38.2,562.6 45.4,570.6 44,572 38.6,567.6 36.6,569.4"/><polygon points="36.4,570.4 37.8,569 42.8,573.6 41.6,575.2"/><rect x="20" y="650" width="26.7" height="2"/><rect x="23.7" y="636.3" width="3.1" height="14"/><rect x="28.9" y="639.3" width="3.1" height="11"/><rect x="34.3" y="631.6" width="3.4" height="18.6"/><rect x="40.2" y="643.1" width="2.9" height="7"/><path fill-rule="evenodd" d="M30.34,696.94 L35.86,696.94 L36.25,700.21 L38.27,701.38 L41.30,700.08 L44.06,704.86 L41.42,706.83 L41.42,709.17 L44.06,711.14 L41.30,715.92 L38.27,714.62 L36.25,715.79 L35.86,719.06 L30.34,719.06 L29.95,715.79 L27.93,714.62 L24.90,715.92 L22.14,711.14 L24.78,709.17 L24.78,706.83 L22.14,704.86 L24.90,700.08 L27.93,701.38 L29.95,700.21 Z M37.8,708 A4.7,4.7 0 1 0 28.4,708 A4.7,4.7 0 1 0 37.8,708 Z"/><line x1="28.2" y1="1062" x2="39" y2="1062" stroke="#000" stroke-width="1.8"/><polyline points="34.4,1057.6 39,1062 34.4,1066.4" fill="none" stroke="#000" stroke-width="1.8"/></g><circle cx="1782.8" cy="20.9" r="4.9" fill="none" stroke="#111" stroke-width="1.8"/><line x1="1786.2" y1="24.4" x2="1791.6" y2="29.8" stroke="#111" stroke-width="2.3"/><polygon points="1799,21.1 1806.8,21.1 1802.9,25" fill="#222"/><rect x="1842.9" y="14.9" width="12.8" height="11.1" fill="#000"/><path d="M1840.9,18 V27.7 H1852.6" fill="none" stroke="#000" stroke-width="1.7"/><ellipse cx="1886.5" cy="18.6" rx="3.7" ry="4.6" fill="#000"/><path d="M1878.6,29.6 V27.2 Q1879.2,23.8 1883.6,23.2 L1886.5,25 L1889.4,23.2 Q1893.6,23.8 1894,27.2 V29.6 Z" fill="#000"/><g transform="translate(1590,76) rotate(-45)"><path d="M-9.6,0 L-6.2,-2.6 H7.2 V2.6 H-6.2 Z" fill="none" stroke="#000" stroke-width="1.5"/><rect x="7.8" y="-2.7" width="3" height="5.4" fill="#000"/><path d="M-9.8,0 L-7.2,-1.9 V1.9 Z" fill="#000"/><line x1="-5" y1="0" x2="6.6" y2="0" stroke="#000" stroke-width="0.9"/></g><circle cx="1617" cy="62" r="7.9" fill="#3b6fdc"/><rect x="1616" y="57.6" width="2" height="1.8" fill="#fff"/><rect x="1616" y="60.6" width="2" height="6" fill="#fff"/><ellipse cx="1632.2" cy="69.4" rx="2.9" ry="3.5" fill="#000"/><path d="M1625,80.2 Q1625.4,75.6 1629.6,74.8 L1632.2,76 L1634.8,74.8 Q1637.6,75.4 1638,77.4 L1636.6,80.2 Z" fill="#000"/><path d="M1639.7,78 V83.6 M1636.9,80.8 H1642.5" stroke="#000" stroke-width="1.4"/><path d="M1674.4,71.3 H1669.2 V78.6 H1678.2" fill="none" stroke="#000" stroke-width="2.2"/><path d="M1685.2,69.1 H1681.2 V73.4 Q1686.2,73.4 1685.8,76.6 Q1685.2,79.5 1680.2,79.6" fill="none" stroke="#000" stroke-width="1.9"/><polygon points="1683.6,66.9 1687.4,69.1 1683.6,71.3" fill="#000"/><ellipse cx="1732.4" cy="74.4" rx="1.9" ry="2.2" fill="#000"/><ellipse cx="1739.4" cy="74.4" rx="1.9" ry="2.2" fill="#000"/><ellipse cx="1746.4" cy="74.4" rx="1.9" ry="2.2" fill="#000"/><rect x="1793" y="67" width="17.8" height="3.4" fill="#000"/><path d="M1793.7,69 V81.9 H1804 M1810.1,69 V75" fill="none" stroke="#000" stroke-width="1.4"/><path d="M1796.4,73.1 H1808 M1796.4,75.6 H1805 M1796.4,78.3 H1803.4" stroke="#000" stroke-width="1.1"/><path d="M1807.4,76.2 V83 M1804,79.6 H1810.8" stroke="#000" stroke-width="1.7"/><polygon points="1820.3,71.6 1827.9,71.6 1824.1,75.2" fill="#111"/><rect x="1850.7" y="65.6" width="20" height="16.8" fill="none" stroke="#000" stroke-width="1.3"/><rect x="1852.6" y="67.3" width="4" height="13.4" fill="#000"/><rect x="1858.6" y="67.3" width="4.2" height="13.4" fill="#000"/><rect x="1864.8" y="67.3" width="4" height="13.4" fill="#000"/><polygon points="1880.8,71.6 1888.9,71.6 1884.85,75.2" fill="#111"/><circle cx="295.6" cy="75.8" r="4.9" fill="#111"/><path d="M295.6,73 V78.6 M292.8,75.8 H298.4" stroke="#fff" stroke-width="1.5"/><path d="M1738.5,122.6 V136.2 M1731.6,129.4 H1745.4" stroke="#111" stroke-width="2.6"/><polyline points="630.2,211.6 636.8,205.0 643.4,211.6" fill="none" stroke="#000" stroke-width="2.3"/><polyline points="630.2,384.6 636.8,378.0 643.4,384.6" fill="none" stroke="#000" stroke-width="2.3"/><rect x="393.9" y="531.4000000000001" width="9" height="15.4" rx="3.2" fill="#d2d2d2"/><rect x="397.9" y="533.8000000000001" width="1.2" height="11" fill="#ebebeb"/><rect x="393.9" y="693.5" width="9" height="15.4" rx="3.2" fill="#d2d2d2"/><rect x="397.9" y="695.9" width="1.2" height="11" fill="#ebebeb"/><polyline points="1234.2,211.6 1240.8,205.0 1247.4,211.6" fill="none" stroke="#000" stroke-width="2.3"/><defs><clipPath id="lowclip"><rect x="900" y="356.9" width="170" height="50"/></clipPath></defs><circle cx="984.4" cy="322.5" r="64.6" fill="none" stroke="#e9e9e9" stroke-width="5.6"/><circle cx="984.4" cy="322.5" r="64.2" fill="none" stroke="#6c8598" stroke-width="6.8" clip-path="url(#lowclip)"/><polyline points="1234.2,681.6 1240.8,675.0 1247.4,681.6" fill="none" stroke="#000" stroke-width="2.3"/><polygon points="1232.6,743.6 1240.4,743.6 1236.5,747.4" fill="#111"/><circle cx="724.7" cy="879" r="5.6" fill="#109e6c"/><circle cx="724.7" cy="924.1" r="5.6" fill="#109e6c"/><circle cx="724.7" cy="969.1" r="5.6" fill="#109e6c"/><circle cx="724.7" cy="1014" r="5.6" fill="#109e6c"/><polyline points="1837.2,211.6 1843.8,205.0 1850.4,211.6" fill="none" stroke="#000" stroke-width="2.3"/><line x1="1639.6" y1="300.4" x2="1667" y2="300.4" stroke="#d4d4d4" stroke-width="1"/><circle cx="1639.6" cy="300.4" r="3.4" fill="#cfcfcf"/><circle cx="1657" cy="300.4" r="3.4" fill="#c9c9c9"/><circle cx="1674" cy="300.4" r="6.6" fill="#fff" stroke="#72ab62" stroke-width="1.8"/><circle cx="1674" cy="300.4" r="2.4" fill="#86a85a"/><line x1="1639.6" y1="340.6" x2="1667" y2="340.6" stroke="#d4d4d4" stroke-width="1"/><circle cx="1639.6" cy="340.6" r="3.4" fill="#cfcfcf"/><circle cx="1657" cy="340.6" r="3.4" fill="#c9c9c9"/><circle cx="1674" cy="340.6" r="6.6" fill="#fff" stroke="#72ab62" stroke-width="1.8"/><circle cx="1674" cy="340.6" r="2.4" fill="#86a85a"/><polyline points="1837.2,435.4 1843.8,442.0 1850.4,435.4" fill="none" stroke="#000" stroke-width="2.3"/><polyline points="1837.2,510.6 1843.8,504.0 1850.4,510.6" fill="none" stroke="#000" stroke-width="2.3"/><g transform="translate(1322.8,549)"><path d="M0.6,0.6 H11.2 L14.6,4 V17.1 H0.6 Z" fill="#fff" stroke="#222" stroke-width="1.2"/><path d="M11,0.8 V4.2 H14.4" fill="none" stroke="#222" stroke-width="1.1"/><path d="M3.6,7.3 H12 M3.6,9.4 H12 M3.6,12 H12 M3.6,14.3 H12" stroke="#222" stroke-width="0.9"/></g><g transform="translate(1588.6,549)"><path d="M0.6,0.6 H11.2 L14.6,4 V17.1 H0.6 Z" fill="#fff" stroke="#222" stroke-width="1.2"/><path d="M11,0.8 V4.2 H14.4" fill="none" stroke="#222" stroke-width="1.1"/><path d="M3.6,7.3 H12 M3.6,9.4 H12 M3.6,12 H12 M3.6,14.3 H12" stroke="#222" stroke-width="0.9"/></g><polyline points="1837.2,643.1 1843.8,636.5 1850.4,643.1" fill="none" stroke="#000" stroke-width="2.3"/><circle cx="1858.6" cy="973.1" r="27" fill="#3f63b1"/><path d="M1858.8,959.2 A12.9,12.9 0 1 0 1866.4,983 L1871.4,987 L1869.6,980.6 A12.9,12.9 0 0 0 1858.8,959.2 Z" fill="#f4faff"/><circle cx="1853.2" cy="972" r="1.3" fill="#333"/><circle cx="1858.6" cy="972" r="1.3" fill="#333"/><circle cx="1864" cy="972" r="1.3" fill="#333"/></svg>
</div></body></html>
